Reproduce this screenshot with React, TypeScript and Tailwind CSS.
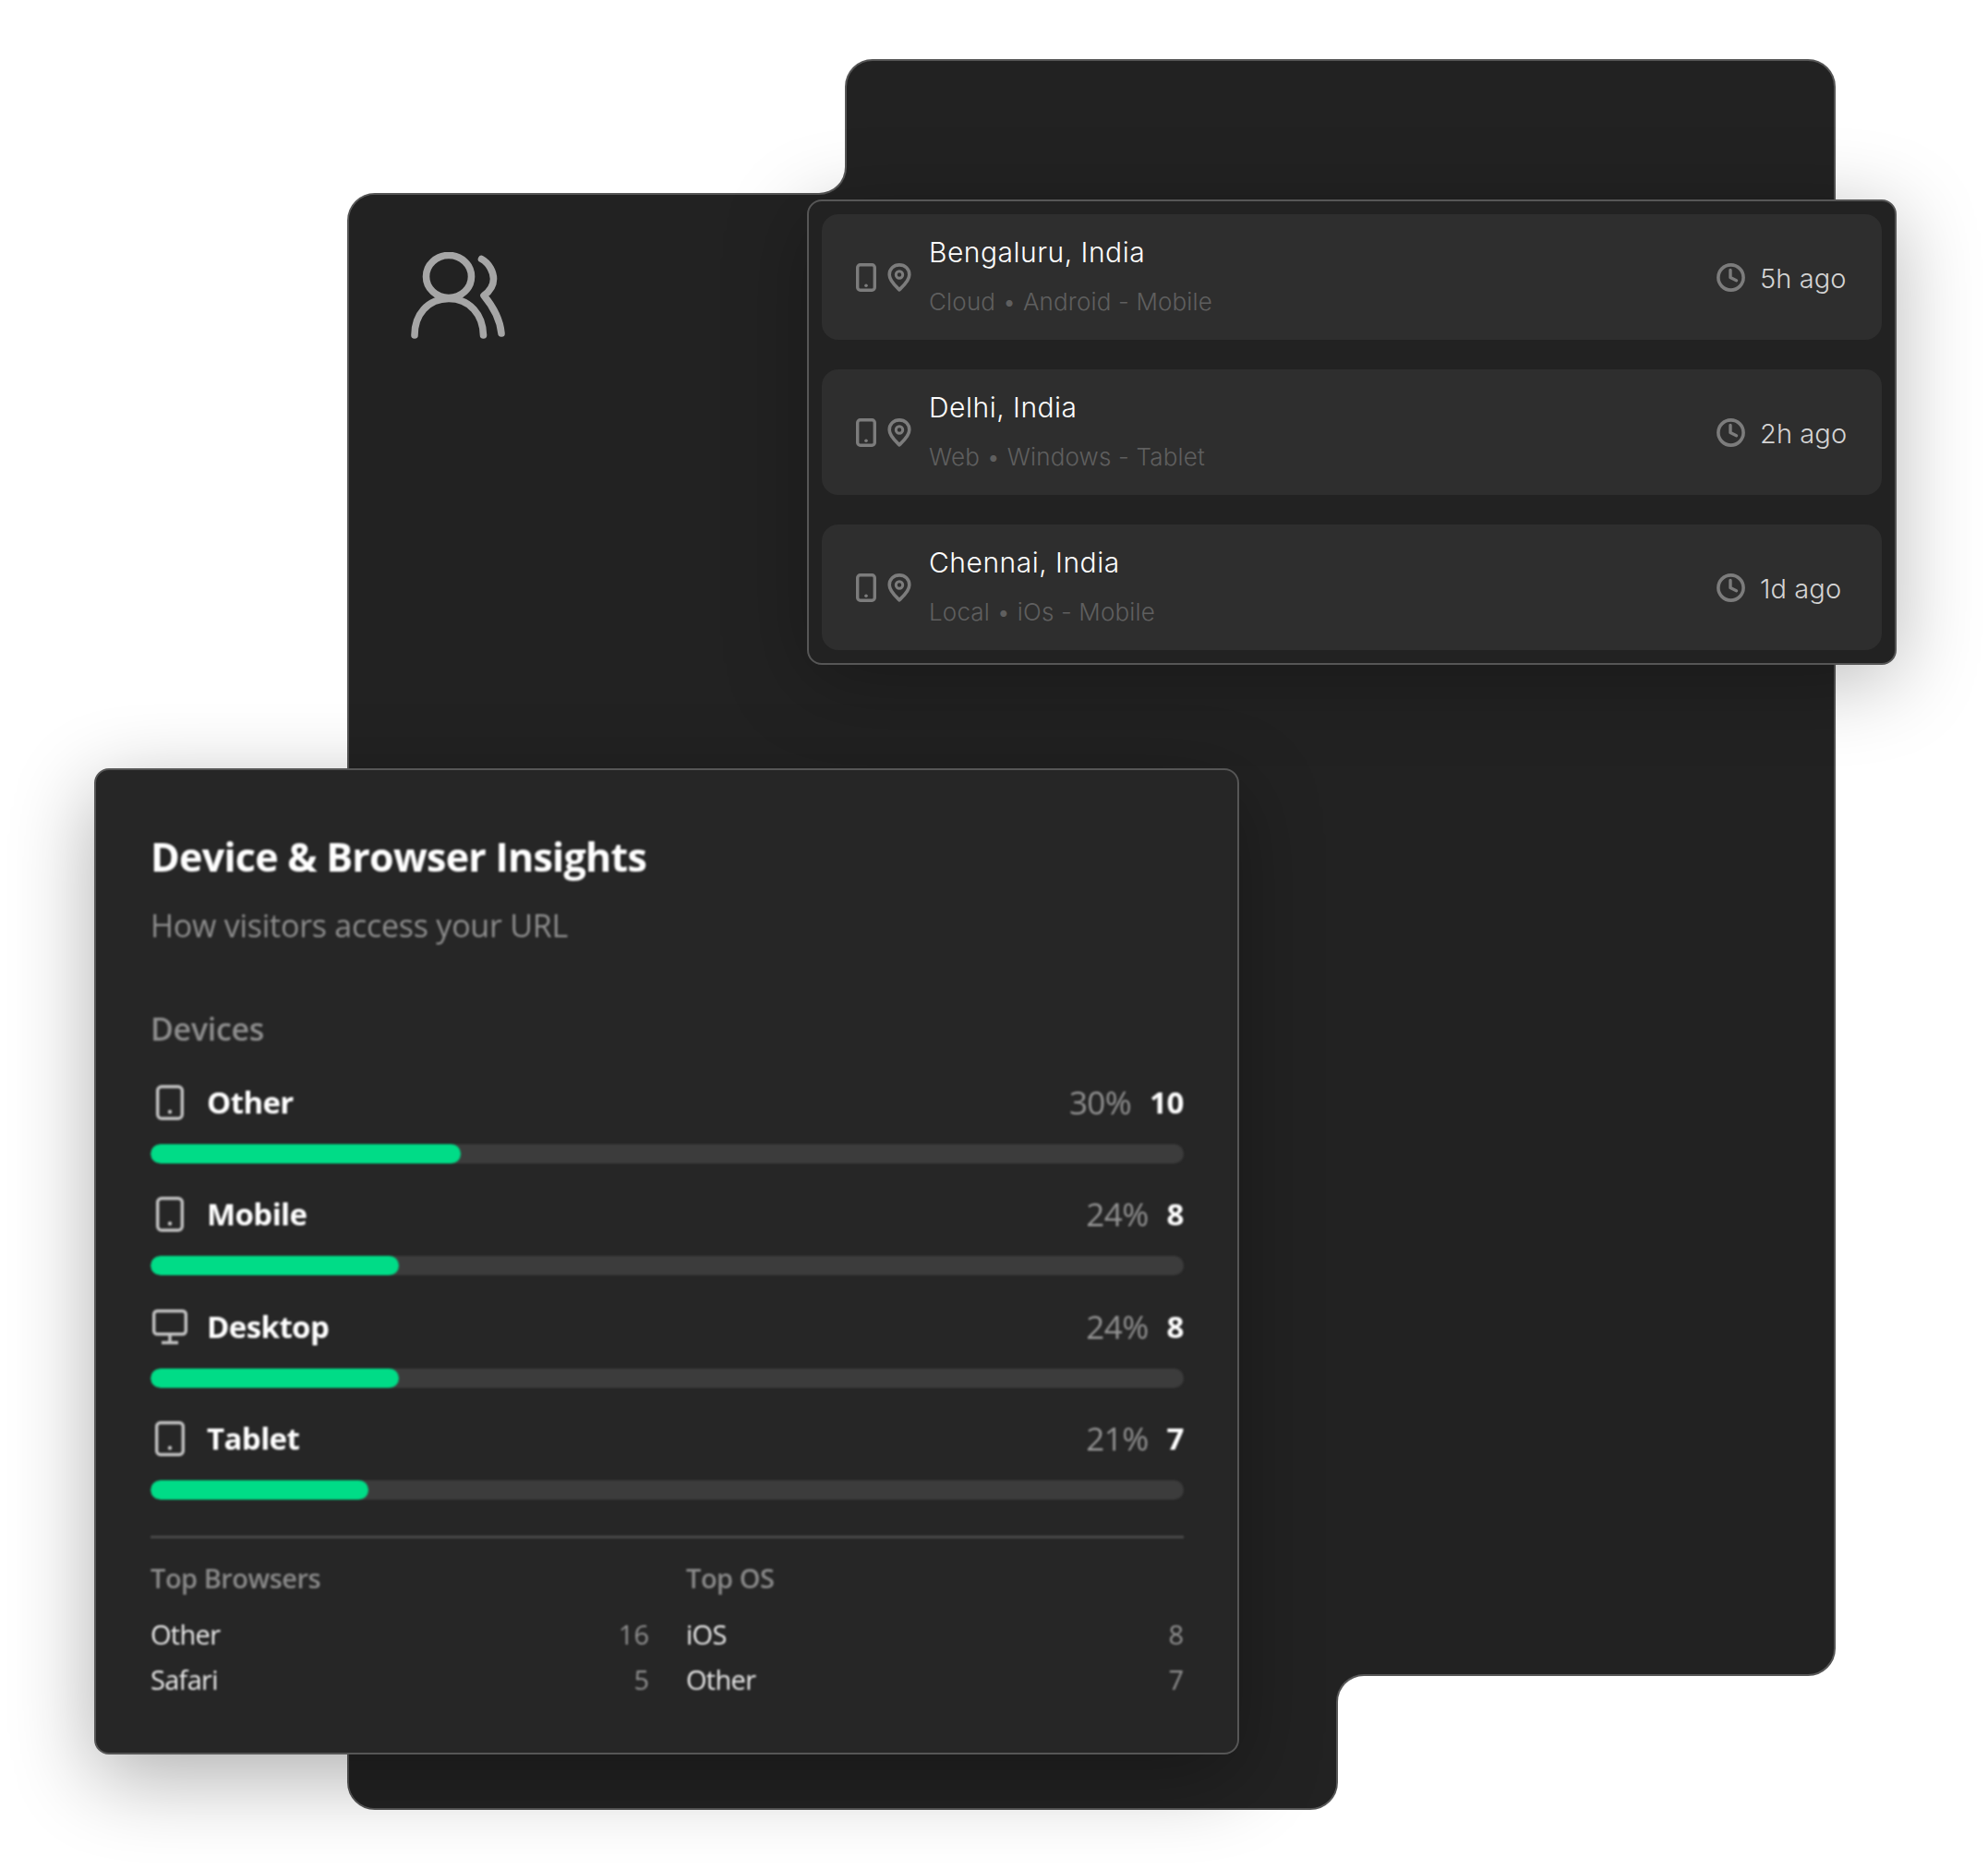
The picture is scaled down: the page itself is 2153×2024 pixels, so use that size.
import React from "react";

const sessions = [
  { city: "Bengaluru, India", meta: "Cloud • Android - Mobile", ago: "5h ago" },
  { city: "Delhi, India", meta: "Web • Windows - Tablet", ago: "2h ago" },
  { city: "Chennai, India", meta: "Local • iOs - Mobile", ago: "1d ago" },
];

const devices = [
  { name: "Other", pct: 30, count: 10, icon: "phone" },
  { name: "Mobile", pct: 24, count: 8, icon: "phone" },
  { name: "Desktop", pct: 24, count: 8, icon: "desktop" },
  { name: "Tablet", pct: 21, count: 7, icon: "tablet" },
];

function SmallPhone() {
  return (
    <svg width="22" height="31" viewBox="0 0 22 31" fill="none">
      <rect x="1.7" y="1.7" width="18.6" height="27.6" rx="3" stroke="#7c7c7c" strokeWidth="3.4" />
      <circle cx="11" cy="24.3" r="1.8" fill="#7c7c7c" />
    </svg>
  );
}

function Pin() {
  return (
    <svg width="26" height="31" viewBox="0 0 26 31" fill="none">
      <path
        d="M13 28.8 C10.5 26 2.2 19.5 2.2 12.5 C2.2 6 7 1.9 13 1.9 C19 1.9 23.8 6 23.8 12.5 C23.8 19.5 15.5 26 13 28.8 Z"
        stroke="#7c7c7c"
        strokeWidth="3.6"
        strokeLinejoin="round"
      />
      <circle cx="13" cy="12.5" r="3.7" stroke="#7c7c7c" strokeWidth="3" />
    </svg>
  );
}

function Clock() {
  return (
    <svg width="31" height="31" viewBox="0 0 31 31" fill="none">
      <circle cx="15.5" cy="15.5" r="13.6" stroke="#7c7c7c" strokeWidth="3.6" />
      <path d="M15 7.5 V15.5 L21.5 18.7" stroke="#7c7c7c" strokeWidth="3.4" strokeLinecap="round" strokeLinejoin="round" />
    </svg>
  );
}

function People() {
  return (
    <svg width="104" height="95" viewBox="0 0 104 95" fill="none" stroke="#a6a6a6" strokeWidth="7.6" strokeLinecap="round" strokeLinejoin="round">
      <ellipse cx="42" cy="26.5" rx="24.5" ry="23" />
      <path d="M5 90 C5 68 19 50.5 42 50.5 C65 50.5 79 68 79.5 90" />
      <path d="M77.5 7.5 C86 12 90.5 22 90.5 29 C90.5 36 87 42 80 47 C90 59 97.5 72 99 88" />
    </svg>
  );
}

function DeviceIcon({ kind }: { kind: string }) {
  const stroke = "#c4c4c4";
  if (kind === "desktop") {
    return (
      <svg width="38" height="38" viewBox="0 0 38 38" fill="none">
        <rect x="1.7" y="1.7" width="34.6" height="25" rx="3.5" stroke={stroke} strokeWidth="3.4" />
        <path d="M19 27 V35 M10 36 H28" stroke={stroke} strokeWidth="3.4" />
      </svg>
    );
  }
  if (kind === "tablet") {
    return (
      <svg width="32" height="38" viewBox="0 0 32 38" fill="none">
        <rect x="1.7" y="1.7" width="28.6" height="34.6" rx="4" stroke={stroke} strokeWidth="3.4" />
        <circle cx="16" cy="29" r="2.2" fill={stroke} />
      </svg>
    );
  }
  return (
    <svg width="30" height="38" viewBox="0 0 30 38" fill="none">
      <rect x="1.7" y="1.7" width="26.6" height="34.6" rx="4.5" stroke={stroke} strokeWidth="3.4" />
      <circle cx="15" cy="29" r="2.2" fill={stroke} />
    </svg>
  );
}

function ListBlock({ title, rows }: { title: string; rows: [string, number][] }) {
  return (
    <div>
      <div className="text-[29px] leading-[40px] font-semibold text-[#8a8a8a] tracking-[-0.5px]">{title}</div>
      <div className="mt-[16px]">
        {rows.map(([name, n]) => (
          <div key={name} className="flex justify-between text-[29px] leading-[49px]">
            <span className="font-medium text-[#ececec] tracking-[-0.7px]">{name}</span>
            <span className="text-[#909090]">{n}</span>
          </div>
        ))}
      </div>
    </div>
  );
}

export default function App() {
  return (
    <div className="grid w-[2153px] h-[2024px] bg-white grid-cols-[102px_274px_498px_41px_427px_107px_539px_66px_99px] grid-rows-[64px_145px_7px_504px_112px_983px_85px_60px_64px] overflow-hidden font-['Inter']">
      {/* backdrop silhouette */}
      <div className="col-start-3 col-end-7 row-start-3 row-end-9 bg-[#222222] border-2 border-[#565656] rounded-l-[30px] rounded-br-[30px]" />
      <div className="col-start-5 col-end-8 row-start-2 row-end-7 bg-[#222222] border-2 border-[#565656] rounded-t-[30px] rounded-br-[30px]" />
      <div className="col-start-3 col-end-7 row-start-3 row-end-9 m-[2px] bg-[#222222] rounded-l-[28px] rounded-br-[28px]" />
      <div className="col-start-4 col-end-5 row-start-2 row-end-3 justify-self-end self-end w-[32px] h-[32px] -mr-[2px] -mb-[2px] bg-[#222222]">
        <div className="w-full h-full bg-white border-r-2 border-b-2 border-[#565656] rounded-br-[30px]" />
      </div>
      <div className="col-start-7 col-end-8 row-start-7 row-end-8 justify-self-start self-start w-[32px] h-[32px] -ml-[2px] -mt-[2px] bg-[#222222]">
        <div className="w-full h-full bg-white border-l-2 border-t-2 border-[#565656] rounded-tl-[30px]" />
      </div>

      {/* people icon */}
      <div className="col-start-3 col-end-4 row-start-3 row-end-5 pl-[68px] pt-[64px]">
        <People />
      </div>

      {/* recent sessions */}
      <div className="col-start-4 col-end-9 row-start-4 row-end-5 flex flex-col gap-[32px] px-[14px] py-[14px] bg-[#222222] border-2 border-[#565656] rounded-[16px] shadow-[0_16px_90px_rgba(0,0,0,0.28)]">
        {sessions.map((s) => (
          <div key={s.city} className="flex items-center h-[136px] pl-[37px] bg-[#2e2e2e] rounded-[18px]">
            <SmallPhone />
            <div className="ml-[12px]">
              <Pin />
            </div>
            <div className="ml-[19px] flex-1 -mt-[1px]">
              <div className="text-[30px] leading-[36px] font-light text-white tracking-[0.5px]">{s.city}</div>
              <div className="mt-[18px] text-[26px] leading-[36px] font-light text-[#5f5f5f] tracking-[0.16px]">{s.meta}</div>
            </div>
            <div className="flex items-center w-[179px] shrink-0">
              <Clock />
              <span className="ml-[16px] mt-[3px] text-[29px] leading-[36px] font-light text-[#d4d4d4] tracking-[0.1px]">{s.ago}</span>
            </div>
          </div>
        ))}
      </div>

      {/* insights card */}
      <div className="col-start-2 col-end-6 row-start-6 row-end-8 bg-[#262626] border-2 border-[#565656] rounded-[16px] shadow-[0_24px_90px_rgba(0,0,0,0.32)]">
        <div className="h-full pl-[59px] pr-[58px] pt-[66px] font-['Open_Sans'] blur-[0.8px]">
          <div className="text-[43px] leading-[56px] font-bold text-white tracking-[-0.75px]">Device &amp; Browser Insights</div>
          <div className="mt-[24px] text-[34px] leading-[44px] font-medium text-[#8e8e8e] tracking-[-0.25px]">How visitors access your URL</div>
          <div className="mt-[70px] text-[34px] leading-[40px] font-semibold text-[#8e8e8e] tracking-[-0.3px]">Devices</div>
          <div className="mt-[39px] flex flex-col gap-[34.33px]">
            {devices.map((d) => (
              <div key={d.name}>
                <div className="flex items-center h-[42px]">
                  <div className="w-[61px] flex justify-center pr-[20px]">
                    <DeviceIcon kind={d.icon} />
                  </div>
                  <span className="flex-1 text-[33px] leading-[42px] font-bold text-white tracking-[-0.6px]">{d.name}</span>
                  <span className="text-[35px] leading-[42px] font-medium text-[#939393] tracking-[-0.6px]">{d.pct}%</span>
                  <span className="ml-[20px] text-[33px] leading-[42px] font-bold text-white tracking-[-0.4px]">{d.count}</span>
                </div>
                <div className="mt-[24px] h-[21px] rounded-full bg-[#3c3c3c] overflow-hidden">
                  <div className="h-full rounded-full bg-[#00dc87]" style={{ width: `${d.pct + 0.05}%` }} />
                </div>
              </div>
            ))}
          </div>
          <div className="mt-[39px] h-[3px] bg-[#484848]" />
          <div className="mt-[23px] grid grid-cols-[540px_539px] gap-x-[40px]">
            <ListBlock title="Top Browsers" rows={[["Other", 16], ["Safari", 5]]} />
            <ListBlock title="Top OS" rows={[["iOS", 8], ["Other", 7]]} />
          </div>
        </div>
      </div>
    </div>
  );
}
